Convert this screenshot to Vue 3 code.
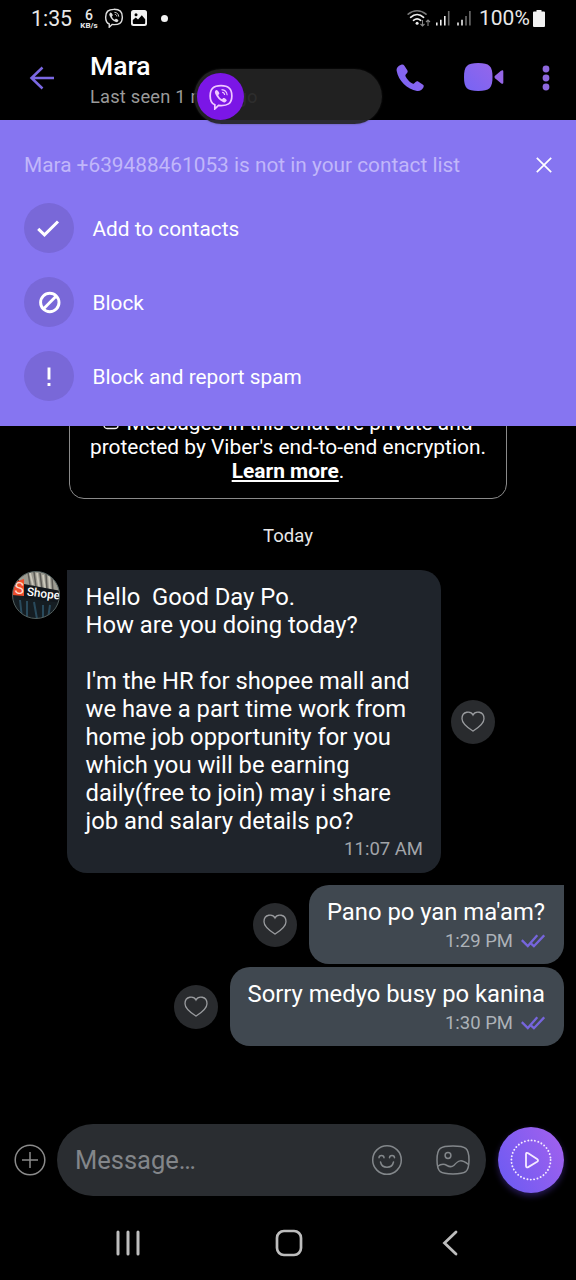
<script setup>
const actions = [
  { id: 'add', label: 'Add to contacts' },
  { id: 'block', label: 'Block' },
  { id: 'spam', label: 'Block and report spam' },
]
const sent = [
  { text: "Pano po yan ma'am?", time: '1:29 PM', first: true },
  { text: 'Sorry medyo busy po kanina', time: '1:30 PM', first: false },
]
const received = [
  'Hello\u00a0 Good Day Po.',
  'How are you doing today?',
  '\u00a0',
  "I'm the HR for shopee mall and",
  'we have a part time work from',
  'home job opportunity for you',
  'which you will be earning',
  'daily(free to join) may i share',
  'job and salary details po?',
]
</script>

<template>
  <div class="screen">
    <div class="status">
      <span class="clock">1:35</span>
      <span class="rate"><b>6</b><i>KB/s</i></span>
      <svg class="st-viber" width="20" height="20" viewBox="0 0 24 24" fill="none" stroke="#dedede" stroke-width="1.700">
        <path d="M12 1.600C5 1.600 2 4.200 2 11c0 4.500 1.300 7 4.300 8.200V23l3.400-3.200c8.400.7 12.300-1.600 12.300-8.800 0-6.800-3-9.400-10-9.400z" />
        <path d="M7.600 5.600c-1.500 1-1.500 2.200-.7 3.900 1.600 3.400 3.800 5.800 7.400 7.300 1.400.5 2.400-.2 3-1.500.4-1-2.600-3-3.300-2.300l-1 1c-1.800-.7-3-2-3.600-3.800l1-1c.6-.8-1.700-4.100-2.800-3.600z" fill="#dedede" stroke="none" />
        <path d="M12.500 5.200c3.400.3 5 2 5.200 5.200M13 7.600c1.600.2 2.300 1 2.400 2.500" stroke-width="1.100" />
      </svg>
      <svg class="st-pic" width="16" height="16" viewBox="0 0 16 16">
        <rect width="16" height="16" rx="2.500" fill="#f2f2f2" />
        <circle cx="5" cy="4.800" r="1.500" fill="#000" />
        <path d="M1.800 12.500V10l3-2.500 2.200 2 3.800-4.300 3.400 4v3.300c0 1-.4 1.500-1.400 1.500H3.300c-1 0-1.500-.5-1.500-1.500z" fill="#000" />
      </svg>
      <span class="dot"></span>
      <svg class="st-net" width="66" height="20" viewBox="0 0 66 20" fill="none">
        <g stroke-width="1.700" stroke-linecap="round">
          <path d="M1.200 5.200C6.500.6 13.500.6 19 5.200" stroke="#777" />
          <path d="M3.600 8.300c4-3.500 9-3.500 13 0" stroke="#eee" />
          <path d="M6.500 11.300c2.300-1.900 4.900-1.900 7.200 0" stroke="#eee" />
        </g>
        <circle cx="10.100" cy="14.300" r="1.500" fill="#eee" />
        <g stroke="#888" stroke-width="1.100">
          <path d="M15.500 11v6M13.500 15l2 2 2-2M21 17v-6M19 13l2-2 2 2" />
        </g>
        <path d="M29.800 13.500v3M33.800 10.800v5.700M37.800 7v9.500M51 13.500v3M55 10.800v5.700" stroke="#eee" stroke-width="1.600" />
        <path d="M41.700 2v14.500M59 7v9.500M62.900 2v14.500" stroke="#6c6c6c" stroke-width="1.600" />
      </svg>
      <span class="pct">100%</span>
      <svg class="st-bat" width="12" height="17" viewBox="0 0 12 17"><path d="M3.500 0h5v1.500H11q1 0 1 1V16q0 1-1 1H1q-1 0-1-1V2.500q0-1 1-1h2.500z" fill="#f2f2f2" /></svg>
    </div>

    <header class="header">
      <svg class="back" width="26" height="24" viewBox="0 0 26 24" fill="none" stroke="#7b68e3" stroke-width="2.500"><path d="M13.500 1.500L2.500 12l11 10.500M2.500 12H25" /></svg>
      <div class="who">
        <div class="name">Mara</div>
        <div class="seen">Last seen 1 min ago</div>
      </div>
      <svg class="call" width="28" height="28" viewBox="0 0 28 28">
        <defs>
          <linearGradient id="vg" x1="0" y1="1" x2="1" y2="0"><stop offset="0" stop-color="#7664f4" /><stop offset="1" stop-color="#9566ea" /></linearGradient>
        </defs>
        <path d="M5.200.7C2 1.700.2 4.200.7 7c1.600 9.400 10.500 18.600 20.300 20 2.900.4 5.300-1.100 6.500-3.800.5-1.200.2-2-.8-2.600l-4.200-2.800c-1-.7-2-.6-2.900.2l-1.300 1.200c-.8.7-1.500.7-2.400.1-2.800-1.900-4.800-4-6.300-6.900-.4-.8-.3-1.500.3-2.200l1.200-1.300c.7-.8.8-1.700.2-2.600L8.400 1.700C7.600.5 6.500.3 5.200.7z" fill="url(#vg)" />
      </svg>
      <svg class="video" width="40" height="28" viewBox="0 0 40 28">
        <path d="M14.200 0C25.500 0 28.500 3 28.500 14S25.500 28 14.200 28 0 25 0 14 3 0 14.200 0z" fill="url(#vg)" />
        <path d="M37 7.700c1.500-.9 2.300-.6 2.300 1v10.600c0 1.600-.8 1.900-2.300 1l-5.700-4.800c-1.100-1-1.100-2 0-3z" fill="#9566e6" />
      </svg>
      <svg class="more" width="8" height="26" viewBox="0 0 8 26" fill="#8e68de"><circle cx="4" cy="4" r="3.400" /><circle cx="4" cy="13" r="3.400" /><circle cx="4" cy="22" r="3.400" /></svg>
    </header>

    <section class="banner">
      <div class="banner-top">
        <span class="notin">Mara +639488461053 is not in your contact list</span>
        <svg width="16" height="16" viewBox="0 0 16 16" stroke="#fff" stroke-width="1.700"><path d="M.8.8l14.400 14.400M15.200.8L.8 15.200" /></svg>
      </div>
      <div v-for="a in actions" :key="a.id" class="action">
        <span class="disc">
          <svg width="26" height="26" viewBox="0 0 26 26" fill="none" stroke="#fff">
            <path v-if="a.id === 'add'" d="M2.200 13.800l6.300 6L22 6.500" stroke-width="3" />
            <g v-else-if="a.id === 'block'" stroke-width="2.900"><circle cx="13.800" cy="13.500" r="9.200" /><path d="M7.600 19.700L20 7.300" /></g>
            <path v-else d="M13 4.500v12M13 20v3" stroke-width="2.900" />
          </svg>
        </span>
        <span class="label">{{ a.label }}</span>
      </div>
    </section>

    <main class="chat">
      <div class="notice">
        <div class="n1">
          <svg width="16" height="20" viewBox="0 0 16 20" fill="none" stroke="#eee" stroke-width="1.300"><rect x="1" y="6" width="14" height="11.500" rx="3" /><path d="M4 6V4.500a4 4 0 018 0V6M8 9.500v5" /></svg>
          <span>Messages in this chat are private and</span>
        </div>
        <div class="n2">protected by Viber's end-to-end encryption.</div>
        <div class="n3"><b>Learn more</b>.</div>
      </div>
      <div class="today">Today</div>

      <div class="row in">
        <svg class="avatar" width="50" height="50" viewBox="0 0 50 50">
          <defs><clipPath id="av"><circle cx="25" cy="25" r="23.500" /></clipPath></defs>
          <g clip-path="url(#av)">
            <rect width="50" height="50" fill="#151d22" />
            <path d="M8 0h42v24L8 14z" fill="#9c9b91" />
            <path d="M17 2l2 13M23 2l2 15M29 3l2 16M35 4l1 16M41 8l1 14" stroke="#5d5b56" stroke-width="1.500" />
            <path d="M19 3l3 12M26 3l2 14M32 5l2 14M38 6l1 14" stroke="#cbc8bb" stroke-width="1.800" />
            <path d="M13 14l37 7v12l-37-5z" fill="#11161b" />
            <path d="M0 13l13-4v17l-13-1z" fill="#ee4d2b" />
            <path d="M9 30l2 18M16 31v18M23 32l3 17M32 35v14M39 35l-2 14" stroke="#294a5c" stroke-width="2" />
            <text x="3.500" y="23.500" class="av-s">S</text>
            <text x="15.500" y="25.500" class="av-t" transform="rotate(7 15.500 25.500)">Shope</text>
          </g>
          <circle cx="25" cy="25" r="23.500" fill="none" stroke="#53605f" stroke-width="1" />
        </svg>
        <div class="bubble received">
          <div v-for="(l, i) in received" :key="i" class="line">{{ l }}</div>
          <div class="time">11:07 AM</div>
        </div>
        <span class="heart"><svg width="24" height="22" viewBox="0 0 24 22" fill="none" stroke="#999b9e" stroke-width="1.300"><path d="M12 4C10-.2 1-.4 1 7.800c0 5.500 6.500 9.500 11 12.300 4.500-2.800 11-6.800 11-12.300C23-.4 14-.2 12 4z" /></svg></span>
      </div>

      <div v-for="m in sent" :key="m.time" class="row out">
        <span class="heart"><svg width="24" height="22" viewBox="0 0 24 22" fill="none" stroke="#999b9e" stroke-width="1.300"><path d="M12 4C10-.2 1-.4 1 7.800c0 5.500 6.500 9.500 11 12.300 4.500-2.800 11-6.800 11-12.300C23-.4 14-.2 12 4z" /></svg></span>
        <div class="bubble sent" :class="{ first: m.first }">
          <div class="line">{{ m.text }}</div>
          <div class="time">
            {{ m.time }}
            <svg width="24" height="14" viewBox="0 0 24 14" fill="none" stroke="#7665dc" stroke-width="2.300"><path d="M.8 6.200L6.800 12 16.300 1.300M10.300 9.800l2.600 2.400L23.200 1.300" /></svg>
          </div>
        </div>
      </div>
    </main>

    <div class="composer">
      <svg class="plus" width="32" height="32" viewBox="0 0 32 32" fill="none" stroke="#8b8b8b" stroke-width="1.500"><circle cx="16" cy="16" r="14.800" /><path d="M16 8v16M8 16h16" /></svg>
      <div class="field">
        <span class="ph">Message…</span>
        <svg class="smile" width="32" height="32" viewBox="0 0 32 32" fill="none" stroke="#83878b" stroke-width="1.500"><circle cx="16" cy="16" r="14.300" /><path d="M8 13.800c0-3.200 5-3.200 5 0M18.500 13.800c0-3.200 5-3.200 5 0M9.500 18c1.500 7 11.500 7 13 0" stroke-linecap="round" /></svg>
        <svg class="pic" width="34" height="30" viewBox="0 0 34 30" fill="none" stroke="#83878b" stroke-width="1.500"><path d="M17 1c12.500 0 16 1.500 16 14s-3.500 14-16 14S1 27.500 1 15 4.500 1 17 1z" /><circle cx="12" cy="10.500" r="2.900" /><path d="M1.500 21.500c4-3 6.500-2.800 9.500-1 2.500 1.500 4.500 2 7-.3 5-5.500 7.500-5.800 14.500-.7" /></svg>
      </div>
      <div class="rec">
        <svg width="66" height="66" viewBox="0 0 66 66" fill="none" stroke="#f4eaff">
          <circle cx="33" cy="33" r="19.600" stroke-width="1.900" stroke-linecap="round" stroke-dasharray="0.100 3.320" />
          <path d="M28 27.300v11.500c0 1.500 1 2 2.200 1.300l8.900-5.300c1.200-.8 1.200-1.900 0-2.700l-8.900-5.900c-1.200-.8-2.200-.3-2.200 1.100z" stroke-width="1.800" />
        </svg>
      </div>
    </div>

    <nav class="nav">
      <svg width="26" height="26" viewBox="0 0 26 26" stroke="#bdbdbd" stroke-width="3" stroke-linecap="round"><path d="M3 2v22M13 2v22M23 2v22" /></svg>
      <svg class="home" width="28" height="28" viewBox="0 0 28 28" fill="none" stroke="#bdbdbd" stroke-width="2.700"><rect x="2" y="2" width="24" height="24" rx="7" /></svg>
      <svg width="16" height="26" viewBox="0 0 16 26" fill="none" stroke="#bdbdbd" stroke-width="2.800" stroke-linecap="round"><path d="M14 2L2.500 13 14 24" /></svg>
    </nav>

    <div class="toast">
      <div class="toast-logo">
        <svg width="26" height="26" viewBox="0 0 24 24" fill="none" stroke="#f0c8ff" stroke-width="1.600">
          <path d="M12 1.600C5 1.600 2 4.200 2 11c0 4.500 1.300 7 4.300 8.200V23l3.400-3.200c8.400.7 12.300-1.600 12.300-8.800 0-6.800-3-9.400-10-9.400z" />
          <path d="M7.600 5.600c-1.500 1-1.500 2.200-.7 3.900 1.600 3.400 3.800 5.800 7.400 7.300 1.400.5 2.400-.2 3-1.500.4-1-2.600-3-3.300-2.300l-1 1c-1.800-.7-3-2-3.600-3.800l1-1c.6-.8-1.700-4.100-2.800-3.600z" fill="#f0c8ff" stroke="none" />
          <path d="M12.500 5.200c3.400.3 5 2 5.200 5.200M13 7.600c1.600.2 2.300 1 2.400 2.500" stroke-width="1" />
        </svg>
      </div>
    </div>
  </div>
</template>

<style>
body { background: #000; }
</style>

<style scoped>
.screen { position: relative; width: 576px; height: 1280px; background: #000; color: #fff; font-family: Roboto, "Liberation Sans", sans-serif; display: flex; flex-direction: column; overflow: hidden; white-space: nowrap; }
svg { display: block; flex: none; }
.status { height: 36px; display: flex; align-items: center; padding: 0 31px 0 31px; box-sizing: border-box; color: #e8e8e8; }
.clock { font-size: 21.300px; width: 48px; }
.rate { width: 20px; display: flex; flex-direction: column; align-items: center; padding-top: 2px; }
.rate b { font-size: 14px; line-height: 13px; font-weight: 500; }
.rate i { font-size: 8px; line-height: 8px; font-style: normal; font-weight: 700; }
.st-viber { margin-left: 5px; }
.st-pic { margin-left: 7px; }
.dot { width: 7px; height: 7px; border-radius: 50%; background: #f2f2f2; margin-left: 14px; }
.st-net { margin: 2px 0 0 auto; }
.pct { font-size: 21px; margin-left: 6px; width: 51px; }
.st-bat { margin-left: 3px; }
.header { height: 84px; display: flex; align-items: flex-start; flex: none; }
.back { margin: 30px 0 0 29px; }
.who { margin-left: 35px; padding-top: 14px; width: 306px; }
.name { font-size: 26.500px; line-height: 32px; font-weight: 500; }
.seen { font-size: 18.300px; line-height: 24px; margin-top: 3px; color: #9a9a9a; letter-spacing: .2px; }
.call { margin-top: 28px; }
.video { margin: 27px 0 0 40px; }
.more { margin: 29px 0 0 37.500px; }
.banner { height: 305.500px; flex: none; background: #8675f1; padding: 0 24px; box-sizing: border-box; }
.banner-top { height: 71px; padding-top: 20px; box-sizing: border-box; display: flex; justify-content: space-between; align-items: flex-start; }
.banner-top svg { margin: 17px 0 0; }
.notin { font-size: 20.820px; line-height: 51px; color: #c1b7fa; }
.action { height: 74.200px; display: flex; align-items: center; }
.disc { width: 50px; height: 50px; border-radius: 50%; background: #7968d8; display: flex; align-items: center; justify-content: center; }
.label { font-size: 20.820px; margin-left: 18.500px; padding-top: 1px; }
.chat { flex: 1; min-height: 0; overflow: hidden; }
.notice { width: 438px; height: 98px; margin: -24.500px 0 0 69px; border: 1px solid #8a8a8a; border-radius: 15px; box-sizing: border-box; text-align: center; font-size: 20.930px; line-height: 24px; padding-top: 9px; }
.n1 { display: flex; justify-content: center; gap: 7px; }
.n3 b { text-decoration: underline; text-underline-offset: 2px; text-decoration-thickness: 1.500px; }
.today { text-align: center; font-size: 18.500px; line-height: 24px; margin-top: 25px; color: #e8e8e8; }
.row { display: flex; align-items: center; }
.in { margin-top: 22px; height: 303px; }
.avatar { align-self: flex-start; margin: 0 0 0 11px; }
.bubble { box-sizing: border-box; }
.received { width: 374px; height: 303px; margin-left: 6px; background: #1f242b; border-radius: 0 20px 20px 20px; padding: 13px 18px 0 18.500px; }
.line { font-size: 23.800px; line-height: 28px; }
.time { font-size: 18.500px; line-height: 24px; color: #a2a5a9; text-align: right; display: flex; justify-content: flex-end; align-items: center; gap: 8px; }
.received .time { margin-top: 2px; }
.heart { width: 44px; height: 44px; border-radius: 50%; background: #292b2e; display: flex; align-items: center; justify-content: center; }
.in .heart { margin-left: 10px; }
.out { justify-content: flex-end; padding-right: 12px; gap: 12px; height: 79px; margin-top: 3px; }
.in + .out { margin-top: 12px; }
.sent { background: #404850; height: 79px; border-radius: 20px; padding: 13px 19px 0 18px; }
.sent.first { border-top-right-radius: 0; }
.sent .time { margin-top: 3px; color: #adb2b8; }
.composer { height: 72px; flex: none; display: flex; align-items: center; margin-bottom: 84px; }
.plus { margin-left: 14px; }
.field { width: 429px; height: 72px; border-radius: 36px; background: #2a2d31; margin-left: 11px; display: flex; align-items: center; padding-left: 18px; box-sizing: border-box; }
.ph { font-size: 25.500px; color: #83868a; width: 296px; }
.pic { margin-left: 32.500px; }
.rec { width: 66px; height: 66px; border-radius: 50%; margin-left: 12px; background: linear-gradient(60deg, #6f5bf2 10%, #9c60ee 85%); box-shadow: 0 3px 6px #4a30a088; }
.nav { height: 84px; margin-top: -84px; flex: none; display: flex; align-items: center; padding: 10px 118px 0 115px; box-sizing: border-box; justify-content: space-between; }
.home { margin-right: 6px; }
.toast { position: absolute; left: 194px; top: 69px; width: 188px; height: 55px; border-radius: 28px; background: rgba(36, 36, 36, .92); box-shadow: 0 0 2px #3338; }
.toast-logo { width: 47px; height: 47px; margin: 4px 0 0 3px; border-radius: 50%; background: #7b16e6; display: flex; align-items: center; justify-content: center; }
.av-s { font: 16px Roboto, sans-serif; fill: #ffd9cc; }
.av-t { font: 500 11.800px Roboto, sans-serif; fill: #fff; }
</style>
